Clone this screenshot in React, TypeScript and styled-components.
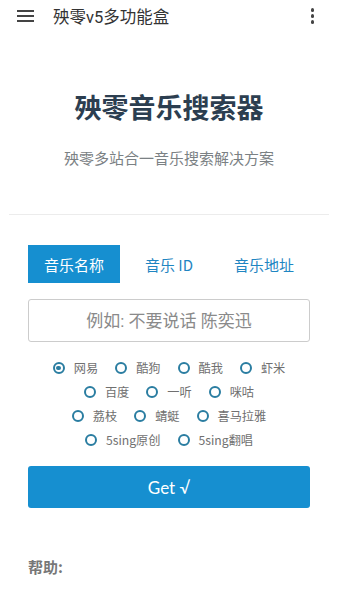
import styled, { createGlobalStyle } from 'styled-components';

const GlobalStyle = createGlobalStyle`
  html, body {
    margin: 0;
    padding: 0;
    background: #ffffff;
  }
  body {
    font-family: Roboto, "Noto Sans CJK SC", sans-serif;
    overflow: hidden;
  }
`;

const Page = styled.div`
  width: 338px;
  height: 600px;
  overflow: hidden;
  background: #ffffff;
`;

const AppBar = styled.div`
  display: flex;
  align-items: center;
  height: 32px;
  padding: 0 14px 0 17px;
  color: #333333;
`;

const Burger = styled.div`
  display: flex;
  flex-direction: column;
  justify-content: space-between;
  width: 17px;
  height: 12px;

  span {
    display: block;
    height: 2px;
    background: #444444;
  }
`;

const BarTitle = styled.div`
  margin-left: 19px;
  flex: 1;
  font-size: 16.5px;
  color: #333333;
`;

const Kebab = styled.div`
  display: flex;
  flex-direction: column;
  gap: 2.5px;
  margin-right: 10px;

  span {
    display: block;
    width: 3.5px;
    height: 3.5px;
    border-radius: 50%;
    background: #444444;
  }
`;

const Hero = styled.div`
  display: flex;
  flex-direction: column;
  align-items: center;
  padding-top: 61px;
`;

const Heading = styled.h1`
  margin: 0;
  font-size: 27px;
  line-height: 27px;
  font-weight: 700;
  color: #2c3e50;
  font-family: "Noto Sans CJK SC", sans-serif;
`;

const Subtitle = styled.p`
  margin: 30px 0 0;
  font-size: 15px;
  line-height: 16px;
  color: #7b8184;
  font-family: "Noto Sans CJK SC", sans-serif;
`;

const Divider = styled.hr`
  margin: 48px 9px 0;
  border: none;
  border-top: 1px solid #ececec;
`;

const Content = styled.div`
  padding: 30px 28px 0;
  font-family: "Noto Sans CJK SC", sans-serif;
`;

const Tabs = styled.div`
  display: flex;
  justify-content: space-between;
`;

const Tab = styled.div<{ $active?: boolean }>`
  display: flex;
  align-items: center;
  justify-content: center;
  height: 38px;
  padding: 0 16px;
  font-size: 15px;
  background: ${(p) => (p.$active ? '#168fd0' : 'transparent')};
  color: ${(p) => (p.$active ? '#ffffff' : '#1f86c2')};
`;

const SearchInput = styled.input`
  display: block;
  box-sizing: border-box;
  width: 100%;
  height: 43px;
  margin-top: 16px;
  border: 1px solid #cccccc;
  border-radius: 3px;
  text-align: center;
  font-size: 17px;
  font-family: Roboto, "Noto Sans CJK SC", sans-serif;
  outline: none;

  &::placeholder {
    color: #8a8a8a;
  }
`;

const Sources = styled.div`
  margin-top: 14px;
`;

const SourceRow = styled.div`
  display: flex;
  justify-content: center;
  gap: 17px;
  height: 24px;
  align-items: center;
`;

const Option = styled.label`
  display: flex;
  align-items: center;
  gap: 9px;
  font-size: 12.2px;
  color: #707070;
`;

const Dot = styled.span<{ $checked?: boolean }>`
  position: relative;
  box-sizing: border-box;
  width: 12px;
  height: 12px;
  border: 2.3px solid #2a7da1;
  border-radius: 50%;

  &::after {
    content: '';
    display: ${(p) => (p.$checked ? 'block' : 'none')};
    position: absolute;
    top: 1.5px;
    left: 1.5px;
    width: 4.4px;
    height: 4.4px;
    border-radius: 50%;
    background: #2a7da1;
  }
`;

const GetButton = styled.button`
  display: block;
  width: 100%;
  height: 42px;
  margin-top: 14px;
  border: none;
  border-radius: 3px;
  background: #168fd0;
  color: #ffffff;
  font-size: 17px;
  font-family: Lato, "Noto Sans CJK SC", sans-serif;
`;

const HelpTitle = styled.div`
  margin-top: 51px;
  font-size: 15px;
  line-height: 16px;
  font-weight: 700;
  color: #777777;
`;

const HelpText = styled.p`
  margin: 22px 0 0;
  font-size: 15px;
  line-height: 22px;
  color: #666666;
`;

const rows: string[][] = [
  ['网易', '酷狗', '酷我', '虾米'],
  ['百度', '一听', '咪咕'],
  ['荔枝', '蜻蜓', '喜马拉雅'],
  ['5sing原创', '5sing翻唱'],
];

const App = () => {
  return (
    <Page>
      <GlobalStyle />
      <AppBar>
        <Burger>
          <span />
          <span />
          <span />
        </Burger>
        <BarTitle>殃零v5多功能盒</BarTitle>
        <Kebab>
          <span />
          <span />
          <span />
        </Kebab>
      </AppBar>

      <Hero>
        <Heading>殃零音乐搜索器</Heading>
        <Subtitle>殃零多站合一音乐搜索解决方案</Subtitle>
      </Hero>
      <Divider />

      <Content>
        <Tabs>
          <Tab $active>音乐名称</Tab>
          <Tab>音乐 ID</Tab>
          <Tab>音乐地址</Tab>
        </Tabs>
        <SearchInput placeholder="例如: 不要说话 陈奕迅" />
        <Sources>
          {rows.map((row, i) => (
            <SourceRow key={i}>
              {row.map((name) => (
                <Option key={name}>
                  <Dot $checked={name === '网易'} />
                  {name}
                </Option>
              ))}
            </SourceRow>
          ))}
        </Sources>
        <GetButton>Get √</GetButton>
        <HelpTitle>帮助:</HelpTitle>
        <HelpText>根据你在哪个站点听歌选择对应的站点搜索</HelpText>
      </Content>
    </Page>
  );
};

export default App;
